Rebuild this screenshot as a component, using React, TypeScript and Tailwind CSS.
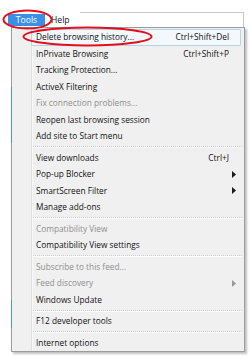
import React from "react";

type Item =
  | { kind: "sep" }
  | { kind: "item"; label: string; shortcut?: string; disabled?: boolean; arrow?: boolean; hot?: boolean };

const items: Item[] = [
  { kind: "item", label: "Delete browsing history...", shortcut: "Ctrl+Shift+Del", hot: true },
  { kind: "item", label: "InPrivate Browsing", shortcut: "Ctrl+Shift+P" },
  { kind: "item", label: "Tracking Protection..." },
  { kind: "item", label: "ActiveX Filtering" },
  { kind: "item", label: "Fix connection problems...", disabled: true },
  { kind: "item", label: "Reopen last browsing session" },
  { kind: "item", label: "Add site to Start menu" },
  { kind: "sep" },
  { kind: "item", label: "View downloads", shortcut: "Ctrl+J" },
  { kind: "item", label: "Pop-up Blocker", arrow: true },
  { kind: "item", label: "SmartScreen Filter", arrow: true },
  { kind: "item", label: "Manage add-ons" },
  { kind: "sep" },
  { kind: "item", label: "Compatibility View", disabled: true },
  { kind: "item", label: "Compatibility View settings" },
  { kind: "sep" },
  { kind: "item", label: "Subscribe to this feed...", disabled: true },
  { kind: "item", label: "Feed discovery", disabled: true, arrow: true },
  { kind: "item", label: "Windows Update" },
  { kind: "sep" },
  { kind: "item", label: "F12 developer tools" },
  { kind: "sep" },
  { kind: "item", label: "Internet options" },
];

function Arrow({ gray }: { gray?: boolean }) {
  return (
    <svg width="4" height="7" viewBox="0 0 4 7" className="block">
      <path d="M0 0 L4 3.5 L0 7 Z" fill={gray ? "#9a9a9a" : "#1a1a1a"} />
    </svg>
  );
}

export default function App() {
  return (
    <div
      className="relative w-[250px] h-[361px] bg-white overflow-hidden text-[8.3px] leading-none font-medium text-[#111111]"
      style={{ fontFamily: '"Open Sans", "Noto Sans", "Liberation Sans", sans-serif' }}
    >
      {/* menu bar */}
      <div className="flex h-[27px] pt-[12px]">
        <div className="w-[8px]" />
        <div className="mt-[2px] h-[12px] w-[37px] bg-[#3b8fe5] text-white flex items-center justify-center text-[8.6px]">
          Tools
        </div>
        <div className="mt-[2px] ml-[6px] h-[12px] flex items-center text-[8.6px]">Help</div>
        <div className="ml-[10px] mr-[6px] flex-1 border-t border-r border-[#c9c9c9]" />
      </div>

      {/* dropdown panel */}
      <div className="relative ml-[11px] w-[234px] border border-[#9c9c9c] bg-[#f0f0f0] pt-[1px] shadow-[2px_2px_2px_rgba(0,0,0,0.25)]">
        {/* gutter line */}
        <div className="absolute left-[19px] top-0 bottom-0 w-[2px] border-l border-[#e0e0e0] bg-white/60" />
        {/* blue artifacts on left edge */}
        <div className="absolute -left-[1px] top-[59px] h-[56px] w-[1px] bg-[#4f8fd8]" />
        <div className="absolute -left-[1px] top-[272px] h-[28px] w-[1px] bg-[#4f8fd8]" />

        {items.map((it, i) =>
          it.kind === "sep" ? (
            <div key={i} className="h-[5px] pl-[21px] pr-[2px] flex flex-col justify-center">
              <div className="h-[1px] border-t border-dotted border-[#cfcfcf]" />
              <div className="h-[1px] bg-white/80" />
            </div>
          ) : (
            <div key={i} className="relative h-[16.5px] flex items-center">
              {it.hot && (
                <div className="absolute left-[19px] right-[3px] top-0 bottom-0 border border-[#b3d3ee] bg-[#f3f8fd] rounded-[1px]" />
              )}
              <span
                className={
                  "relative ml-[24px] whitespace-nowrap " + (it.disabled ? "text-[#8e8e8e]" : "text-[#111111]")
                }
              >
                {it.label}
              </span>
              <div className="flex-1" />
              {it.shortcut && <span className="relative mr-[15px] whitespace-nowrap">{it.shortcut}</span>}
              {it.arrow && (
                <span className="relative mr-[8px]">
                  <Arrow gray={it.disabled} />
                </span>
              )}
            </div>
          )
        )}
      </div>

      {/* red annotation ellipses */}
      <svg className="absolute left-0 top-0 pointer-events-none" width="250" height="361">
        <ellipse cx="27.5" cy="19.5" rx="24" ry="9" fill="none" stroke="#e3101c" strokeWidth="2" />
        <ellipse cx="87.5" cy="36.5" rx="64" ry="9" fill="none" stroke="#e3101c" strokeWidth="2" />
      </svg>
    </div>
  );
}
